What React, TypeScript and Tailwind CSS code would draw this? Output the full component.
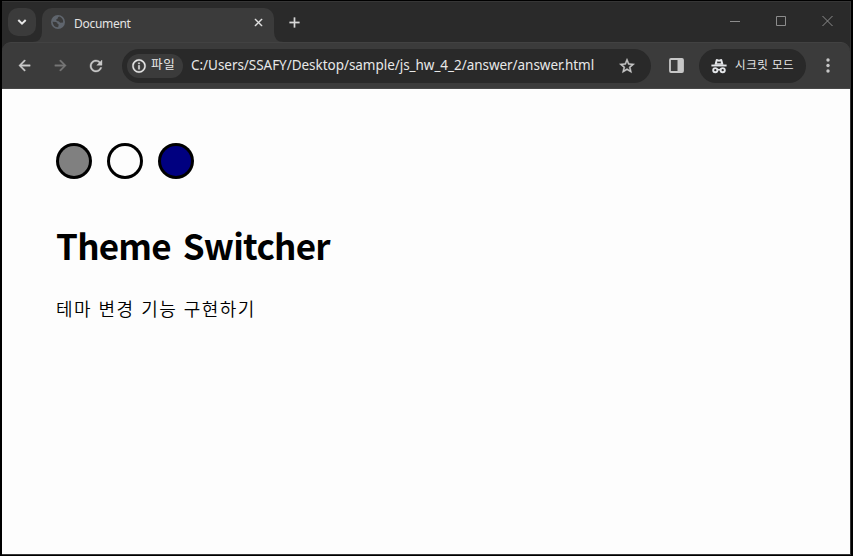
import type { ReactNode } from 'react';
import {
  MdAdd,
  MdArrowBack,
  MdArrowForward,
  MdClose,
  MdInfoOutline,
  MdRefresh,
  MdStarBorder,
} from 'react-icons/md';

function GlobeIcon() {
  return (
    <svg width="14" height="14" viewBox="0 0 14 14">
      <circle cx="7" cy="7" r="7" fill="#5f656d" />
      <path d="M8.2 1.6Q6.6 2 6.7 3.6L5 4.7q.6 1.6 2.5 1.5l1.8 1.6 2.8-.3Q12.7 3.5 8.2 1.6Z" fill="#3b3b3b" />
      <path d="M1.6 6.8 4.8 7q2 .4 1.8 2l1.2.6-.7 2.7Q2.2 12.3 1.6 6.8Z" fill="#3b3b3b" />
    </svg>
  );
}

function IncognitoIcon() {
  return (
    <svg width="16" height="16" viewBox="0 0 16 16" fill="none" stroke="#e4e6e9">
      <path d="M3.500 6.800 4.800 1.800Q5.100.9 6 1.100L8 1.700l2-.6q.9-.2 1.200.7l1.300 5z" fill="#e4e6e9" stroke="none" />
      <path d="M6 5.300 6.500 3.300l1.500.4 1.500-.4.5 2z" fill="#292929" stroke="none" />
      <path d="M.4 7.500h15.200" strokeWidth="1.9" />
      <circle cx="4.3" cy="12.2" r="2.1" strokeWidth="1.9" />
      <circle cx="11.7" cy="12.2" r="2.1" strokeWidth="1.9" />
      <path d="M6.5 12q1.500-1 3 0" strokeWidth="1.7" />
    </svg>
  );
}

function SidePanelIcon() {
  return (
    <svg width="15" height="15" viewBox="0 0 15 15">
      <rect x="1" y="1" width="13" height="13" rx="1" fill="none" stroke="#c7c7c7" strokeWidth="1.8" />
      <path d="M8.5 1H14v13H8.5z" fill="#c7c7c7" />
    </svg>
  );
}

function TabStrip() {
  return (
    <header className="flex h-[40px] items-start bg-[#2a2a2a] pl-[6px] pt-[6px]">
      <button className="flex size-7 shrink-0 items-center justify-center rounded-[10px] bg-[#3b3b3b]">
        <svg width="10" height="8" viewBox="0 0 10 8" fill="none" stroke="#e8e8e8" strokeWidth="2"><path d="m1.3 2 3.7 3.6L8.7 2" /></svg>
      </button>
      <div className="relative ml-[6px] flex h-[34px] w-[232px] shrink-0 items-center rounded-t-[10px] bg-[#3b3b3b] pb-[4px] pl-[9px]">
        <svg className="absolute bottom-0 -left-[10px]" width="10" height="10">
          <path d="M10 0v10H0Q10 10 10 0" fill="#3b3b3b" />
        </svg>
        <svg className="absolute -right-[10px] bottom-0" width="10" height="10">
          <path d="M0 0v10h10Q0 10 0 0" fill="#3b3b3b" />
        </svg>
        <span className="-mt-[2px]"><GlobeIcon /></span>
        <span className="ml-[9px] mt-px text-[12px] tracking-[-0.3px] text-[#e4e4e4]">Document</span>
        <MdClose className="-mt-px ml-auto mr-[9px] [&>path:last-child]:[stroke-width:0.7]" size={13} color="#e8e8e8" />
      </div>
      <MdAdd className="ml-[12px] mt-[6px] [&>path:last-child]:[stroke-width:0.4]" size={17} color="#d8d8d8" />
      <div className="ml-auto mr-[17px] mt-[7px] flex items-start gap-[35px]">
        <svg width="11" height="12" stroke="#8c8c8c"><path d="M0 6.5h10" /></svg>
        <svg width="11" height="12" stroke="#8c8c8c" fill="none"><path d="M.5 1.5h9v9h-9z" /></svg>
        <svg width="11" height="12" stroke="#8c8c8c"><path d="m.5 1 10 10m0-10-10 10" /></svg>
      </div>
    </header>
  );
}

function Toolbar() {
  return (
    <div className="bg-[#2a2a2a]">
      <nav className="flex h-[47px] items-center rounded-t-[9px] border-b border-t border-b-[#484848] border-t-[#424242] bg-[#3b3b3b] pl-[14px]">
        <MdArrowBack className="[&>path:last-child]:[stroke-width:0.6]" size={17} color="#cacaca" />
        <MdArrowForward className="ml-[19px] [&>path:last-child]:[stroke-width:0.6]" size={17} color="#777777" />
        <MdRefresh className="ml-[18px] [&>path:last-child]:[stroke-width:0.5]" size={18} color="#cacaca" />
        <div className="ml-[17px] flex h-[34px] w-[529px] shrink-0 items-center rounded-full bg-[#292929] pl-[5px]">
          <div className="flex h-6 w-[56px] shrink-0 items-center rounded-full bg-[#3b3b3b] pl-[4px]">
            <MdInfoOutline className="[&>path:last-child]:[stroke-width:0.5]" size={16} color="#e8e8e8" />
            <span className="ml-[4px] whitespace-nowrap text-[12.5px] tracking-[0.7px] text-[#e8e8e8]">파일</span>
          </div>
          <span className="ml-[8px] whitespace-nowrap text-[13.5px] tracking-[-0.04px] text-[#e8e8e8]">
            C:/Users/SSAFY/Desktop/sample/js_hw_4_2/answer/answer.html
          </span>
          <MdStarBorder className="ml-auto mr-[15px] shrink-0 [&>path:last-child]:[stroke-width:0.6]" size={18} color="#c7c7c7" />
        </div>
        <div className="ml-[18px]"><SidePanelIcon /></div>
        <div className="ml-[15px] flex h-[34px] w-[107px] shrink-0 items-center rounded-full bg-[#292929] pl-[12px]">
          <IncognitoIcon />
          <span className="-mt-px ml-[8px] whitespace-nowrap text-[11.5px] tracking-[0.55px] text-[#e8e8e8]">시크릿 모드</span>
        </div>
        <svg className="ml-[20px]" width="4" height="15" viewBox="0 0 4 15" fill="#c7c7c7">
          <circle cx="2" cy="2" r="1.7" />
          <circle cx="2" cy="7.5" r="1.7" />
          <circle cx="2" cy="13" r="1.7" />
        </svg>
      </nav>
    </div>
  );
}

function ThemeButton({ children }: { children: ReactNode }) {
  return <div className="size-9 rounded-full bg-black p-[3px]">{children}</div>;
}

export default function App() {
  return (
    <div className="h-[556px] w-[853px] overflow-hidden bg-black pl-[2px] pt-px font-['Noto_Sans','Noto_Sans_CJK_KR',sans-serif]">
      <div className="flex h-[554px] w-[849px] flex-col border-b border-r border-t border-[#363636]">
        <TabStrip />
        <Toolbar />
        <main className="flex-1 bg-[#fdfdfd] pl-[54px] pt-[54px] text-black">
          <div className="flex gap-[15px]">
            <ThemeButton><div className="size-full rounded-full bg-[#808080]" /></ThemeButton>
            <ThemeButton><div className="size-full rounded-full bg-[#fdfdfd]" /></ThemeButton>
            <ThemeButton><div className="size-full rounded-full bg-[#000080]" /></ThemeButton>
          </div>
          <h1 className="mt-[41px] whitespace-nowrap font-['Noto_Sans_CJK_KR',sans-serif] text-[35px] font-bold leading-[50px] tracking-[-0.75px] [word-spacing:4.5px]">Theme Switcher</h1>
          <p className="mt-[25px] whitespace-nowrap text-[18px] font-[350] leading-[28px] tracking-[1.4px] [word-spacing:0.6px]">테마 변경 기능 구현하기</p>
        </main>
      </div>
    </div>
  );
}
